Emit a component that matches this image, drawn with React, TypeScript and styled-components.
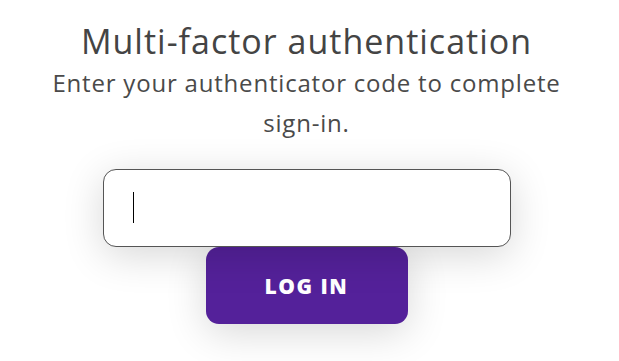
import React, { useState } from 'react';
import { styled, createGlobalStyle } from 'styled-components';

const GlobalStyle = createGlobalStyle`
  html, body {
    margin: 0;
    padding: 0;
    background: #ffffff;
  }
  body {
    font-family: 'Open Sans', 'Liberation Sans', sans-serif;
  }
`;

const Page = styled.main`
  width: 613px;
  height: 361px;
  display: flex;
  flex-direction: column;
  align-items: center;
  padding-top: 19px;
  box-sizing: border-box;
  overflow: hidden;
`;

const Title = styled.h1`
  margin: 0;
  font-size: 34px;
  font-weight: 500;
  line-height: 44px;
  letter-spacing: 1px;
  color: #444444;
`;

const Subtitle = styled.p`
  margin: 0;
  width: 530px;
  text-align: center;
  font-size: 24px;
  font-weight: 400;
  line-height: 40px;
  letter-spacing: 0.8px;
  color: #4a4a4a;
`;

const Form = styled.form`
  margin-top: 26px;
  display: flex;
  flex-direction: column;
  align-items: center;
`;

const Field = styled.div`
  position: relative;
`;

const CodeInput = styled.input<{ $fakeCaret: boolean }>`
  display: block;
  width: 408px;
  height: 78px;
  box-sizing: border-box;
  padding: 0 30px;
  border: 1px solid #555555;
  border-radius: 13px;
  background: #ffffff;
  font-family: inherit;
  font-size: 26px;
  color: #222222;
  caret-color: ${({ $fakeCaret }) => ($fakeCaret ? 'transparent' : '#000000')};
  outline: none;
  box-shadow: 0 8px 40px rgba(0, 0, 0, 0.16);
`;

const Caret = styled.span`
  position: absolute;
  left: 30px;
  top: 23px;
  width: 1px;
  height: 31px;
  background: #000000;
  pointer-events: none;
`;

const LoginButton = styled.button`
  width: 202px;
  height: 77px;
  border: none;
  border-radius: 13px;
  background: #54219a;
  color: #ffffff;
  font-family: inherit;
  font-size: 21px;
  font-weight: 800;
  letter-spacing: 1.5px;
  cursor: pointer;
  box-shadow: 0 8px 40px rgba(0, 0, 0, 0.16);
`;

export default function App() {
  const [code, setCode] = useState('');
  const [focused, setFocused] = useState(true);
  const fakeCaret = focused && code === '';

  return (
    <>
      <GlobalStyle />
      <Page>
        <Title>Multi-factor authentication</Title>
        <Subtitle>Enter your authenticator code to complete sign-in.</Subtitle>
        <Form onSubmit={(e) => e.preventDefault()}>
          <Field>
            <CodeInput
              type="text"
              autoFocus
              aria-label="Authenticator code"
              value={code}
              $fakeCaret={fakeCaret}
              onChange={(e) => setCode(e.target.value)}
              onFocus={() => setFocused(true)}
              onBlur={() => setFocused(false)}
            />
            {fakeCaret && <Caret />}
          </Field>
          <LoginButton type="submit">LOG IN</LoginButton>
        </Form>
      </Page>
    </>
  );
}
